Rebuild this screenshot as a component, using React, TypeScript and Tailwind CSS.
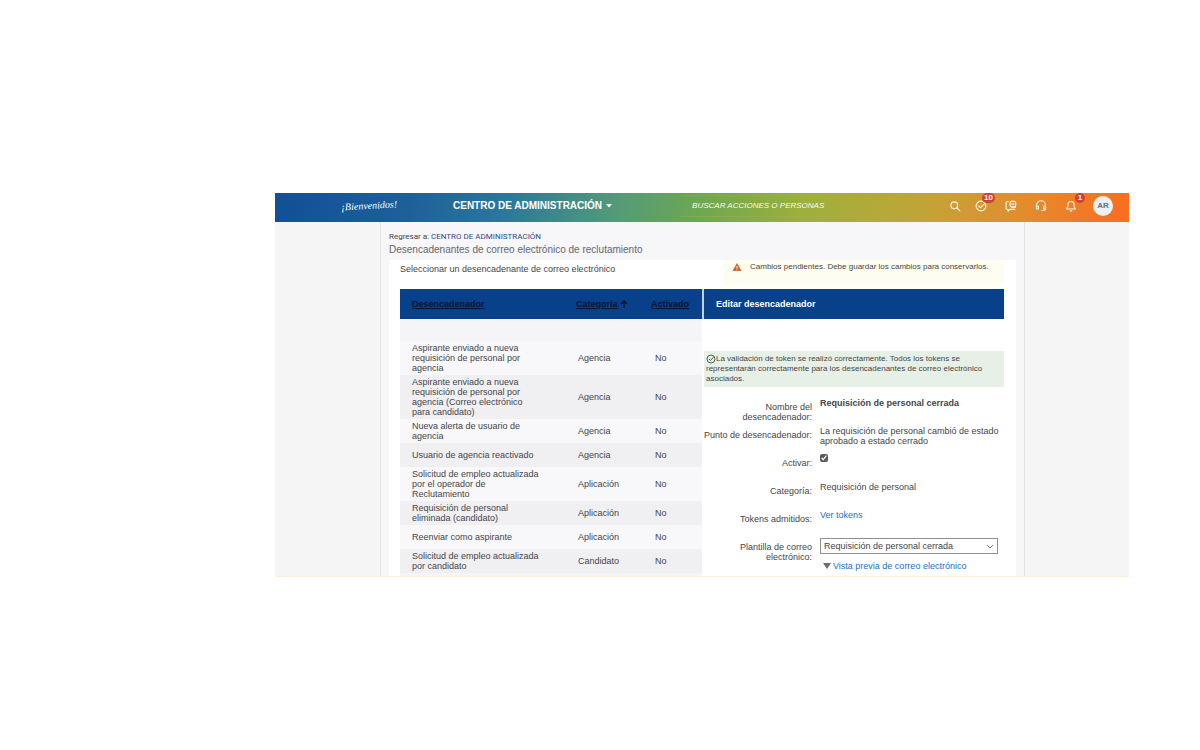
import { ReactNode } from "react";

const rows = [
  ["Aspirante enviado a nueva requisición de personal por agencia", "Agencia", "No"],
  ["Aspirante enviado a nueva requisición de personal por agencia (Correo electrónico para candidato)", "Agencia", "No"],
  ["Nueva alerta de usuario de agencia", "Agencia", "No"],
  ["Usuario de agencia reactivado", "Agencia", "No"],
  ["Solicitud de empleo actualizada por el operador de Reclutamiento", "Aplicación", "No"],
  ["Requisición de personal eliminada (candidato)", "Aplicación", "No"],
  ["Reenviar como aspirante", "Aplicación", "No"],
  ["Solicitud de empleo actualizada por candidato", "Candidato", "No"],
];

function HeaderIcon({ label, badge, className = "", children }: { label: string; badge?: string; className?: string; children: ReactNode }) {
  return (
    <button type="button" aria-label={label} className={`relative flex h-4 w-4 items-center justify-center text-[#fff3dc] ${className}`}>
      <svg viewBox="0 0 16 16" className="h-3 w-3" fill="none" stroke="currentColor" strokeWidth="1.5" strokeLinecap="round" strokeLinejoin="round">
        {children}
      </svg>
      {badge && (
        <span className="absolute -top-[5px] -right-1.5 flex h-2.5 min-w-2.5 items-center justify-center rounded-full bg-[#d33f3c] px-0.5 text-[8px] leading-none font-bold text-white">
          {badge}
        </span>
      )}
    </button>
  );
}

function Field({ label, htmlFor, children }: { label: string; htmlFor?: string; children: ReactNode }) {
  return (
    <div className="flex min-h-7 gap-2">
      <label htmlFor={htmlFor} className="w-[110px] shrink-0 pt-1 text-right">
        {label}
      </label>
      <div className="min-w-0 flex-1">{children}</div>
    </div>
  );
}

export default function App() {
  return (
    <div className="min-h-screen bg-white pt-[193px] pr-[71px] pl-[275px] font-['Liberation_Sans',Arial,sans-serif] text-[9px] leading-[10px] text-[#454549]">
      <div className="border-b border-[#fbf0dc] bg-[#f5f5f6]">
        <header className="flex h-[29px] items-center bg-[linear-gradient(100deg,#124f96_0%,#1c5f99_15%,#2c779b_27%,#549a78_40%,#6da851_50%,#9db03c_62%,#c2a438_76%,#e48b2e_88%,#fb6c20_100%)] pr-4 pb-1 text-white">
          <span className="ml-[66px] w-[54px] -rotate-3 font-['Liberation_Serif',serif] text-[10px] whitespace-nowrap italic">¡Bienvenidos!</span>
          <button type="button" className="ml-[58px] flex items-center gap-1 text-[10px] font-bold whitespace-nowrap">
            CENTRO DE ADMINISTRACIÓN
            <svg viewBox="0 0 6 4" className="h-1 w-1.5" fill="currentColor"><path d="M0 0h6L3 3.5z" /></svg>
          </button>
          <input
            type="search"
            aria-label="Buscar acciones o personas"
            placeholder="BUSCAR ACCIONES O PERSONAS"
            className="ml-[68px] h-[22px] min-w-0 flex-1 rounded-r-full border-y border-r border-[#b3a95a]/40 bg-transparent px-3 text-[8px] italic outline-none placeholder:text-[#fbfbe8]"
          />
          <nav className="ml-6 flex items-center gap-3.5">
            <HeaderIcon label="Buscar" className="-mr-1"><circle cx="7" cy="7" r="4.5" /><path d="m10.5 10.5 4 4" /></HeaderIcon>
            <HeaderIcon label="Tareas" badge="10"><circle cx="8" cy="8" r="6.5" /><path d="m5 8 2.2 2.2L12 5.5" /></HeaderIcon>
            <HeaderIcon label="Mensajes"><path d="M4.500 2H3a1.500 1.500 0 0 0-1.500 1.500V11A1.500 1.500 0 0 0 3 12.500h1V15l2.500-2.500H13" /><circle cx="10.500" cy="5.500" r="4" /><path d="M9 5.500h3M9 9.500h5" /></HeaderIcon>
            <HeaderIcon label="Ayuda"><path d="M2 9V7a6 6 0 0 1 12 0v5a2 2 0 0 1-2 2H9" /><path d="M2 8h2.500v4H2zM11.500 8H14v4h-2.500z" /></HeaderIcon>
            <HeaderIcon label="Notificaciones" badge="1"><path d="M2 12c2-1.500 2-4 2-6a4 4 0 0 1 8 0c0 2 0 4.500 2 6zM7 14.500h2" /></HeaderIcon>
            <button type="button" className="h-5 w-5 rounded-full bg-[#eef0f2] text-[8px] font-bold text-[#64717f]">AR</button>
          </nav>
        </header>

        <main className="mr-[104px] ml-[105px] h-[354px] overflow-hidden border-x border-[#e4e4e6] bg-[#f7f6f9] pr-2">
          <div className="px-2 pt-[10px]">
            <p className="font-[Roboto,sans-serif] text-[8px]">
              Regresar a: <a href="#centro" className="text-[#37467f]">CENTRO DE ADMINISTRACIÓN</a>
            </p>
            <h1 className="pt-0.5 text-[10px] leading-[12px] text-[#66666b]">Desencadenantes de correo electrónico de reclutamiento</h1>
          </div>

          <section className="mt-1 ml-2 bg-white pr-3 pl-[11px]">
            <div className="flex h-[29px] items-start justify-between">
              <p className="pt-1">Seleccionar un desencadenante de correo electrónico</p>
              <div className="flex h-[26px] w-[280px] items-start gap-2 bg-[#fffdf0] pt-0.5 pl-2">
                <svg viewBox="0 0 10 10" className="h-2.5 w-2.5 shrink-0"><path d="M5 1 9.500 9h-9z" fill="#c9682c" /><path d="M5 4v2.500M5 7.500v.8" stroke="#fff" /></svg>
                <span className="text-[8px] whitespace-nowrap">Cambios pendientes. Debe guardar los cambios para conservarlos.</span>
              </div>
            </div>

            <div className="flex items-stretch">
              <div className="w-1/2 bg-[#f5f4f6]">
                <table className="w-full table-fixed border-collapse text-left">
                  <thead>
                    <tr className="h-[30px] bg-[#08408a] text-[#06142e]">
                      <th className="pl-3"><button type="button" className="font-bold underline">Desencadenador</button></th>
                      <th className="w-[75px]">
                        <button type="button" className="flex items-center gap-0.5 font-bold whitespace-nowrap underline">
                          Categoría
                          <svg viewBox="0 0 8 8" className="h-2 w-2" fill="none" stroke="currentColor" strokeWidth="1.5"><path d="M4 8V1M1 4l3-3 3 3" /></svg>
                        </button>
                      </th>
                      <th className="w-[51px]"><button type="button" className="font-bold underline">Activado</button></th>
                    </tr>
                    <tr className="h-[22px]"><td colSpan={3} /></tr>
                  </thead>
                  <tbody>
                    {rows.map(([name, category, active]) => (
                      <tr key={name} className="h-6 odd:bg-[#f8f7fa] even:bg-[#f0eff2]">
                        <td className="py-0.5 pr-9 pl-3">{name}</td>
                        <td className="pl-0.5">{category}</td>
                        <td className="pl-1">{active}</td>
                      </tr>
                    ))}
                  </tbody>
                </table>
              </div>

              <div className="w-1/2 pb-3">
                <h2 className="flex h-[30px] items-center border-l-2 border-[#bcd2ea] bg-[#08408a] pl-3 font-bold text-white">Editar desencadenador</h2>
                <p className="mt-8 ml-0.5 bg-[#e7f0e6] py-[3px] pr-2 pl-0.5 text-[8px]">
                  <svg viewBox="0 0 10 10" className="inline h-2.5 w-2.5 align-top" fill="none" stroke="#4d6555"><circle cx="5" cy="5" r="4" /><path d="m3 5 1.500 1.500L7.500 3" /></svg>
                  La validación de token se realizó correctamente. Todos los tokens se representarán correctamente para los desencadenantes de correo electrónico asociados.
                </p>
                <form className="pt-[11px]">
                  <Field label="Nombre del desencadenador:"><strong>Requisición de personal cerrada</strong></Field>
                  <Field label="Punto de desencadenador:">La requisición de personal cambió de estado aprobado a estado cerrado</Field>
                  <Field label="Activar:" htmlFor="activar"><input id="activar" type="checkbox" defaultChecked className="block h-2 w-2 accent-[#5b5b60]" /></Field>
                  <Field label="Categoría:">Requisición de personal</Field>
                  <Field label="Tokens admitidos:"><a href="#tokens" className="text-[#1672c4]">Ver tokens</a></Field>
                  <Field label="Plantilla de correo electrónico:" htmlFor="plantilla">
                    <div className="grid w-[178px] items-center">
                      <select id="plantilla" className="col-start-1 row-start-1 h-4 w-full appearance-none border border-[#8e8e92] bg-white px-[3px] leading-[12px]">
                        <option>Requisición de personal cerrada</option>
                      </select>
                      <svg viewBox="0 0 8 8" className="pointer-events-none col-start-1 row-start-1 mr-1 h-2 w-2 justify-self-end" fill="none" stroke="#77777b"><path d="m1 3 3 3 3-3" /></svg>
                    </div>
                    <a href="#vista" className="mt-[7px] flex items-center gap-0.5 pl-[3px] text-[#1672c4]">
                      <svg viewBox="0 0 8 6" className="h-1.5 w-2" fill="#6c6c70"><path d="M0 0h8L4 6z" /></svg>
                      Vista previa de correo electrónico
                    </a>
                  </Field>
                </form>
              </div>
            </div>
          </section>
        </main>
      </div>
    </div>
  );
}
